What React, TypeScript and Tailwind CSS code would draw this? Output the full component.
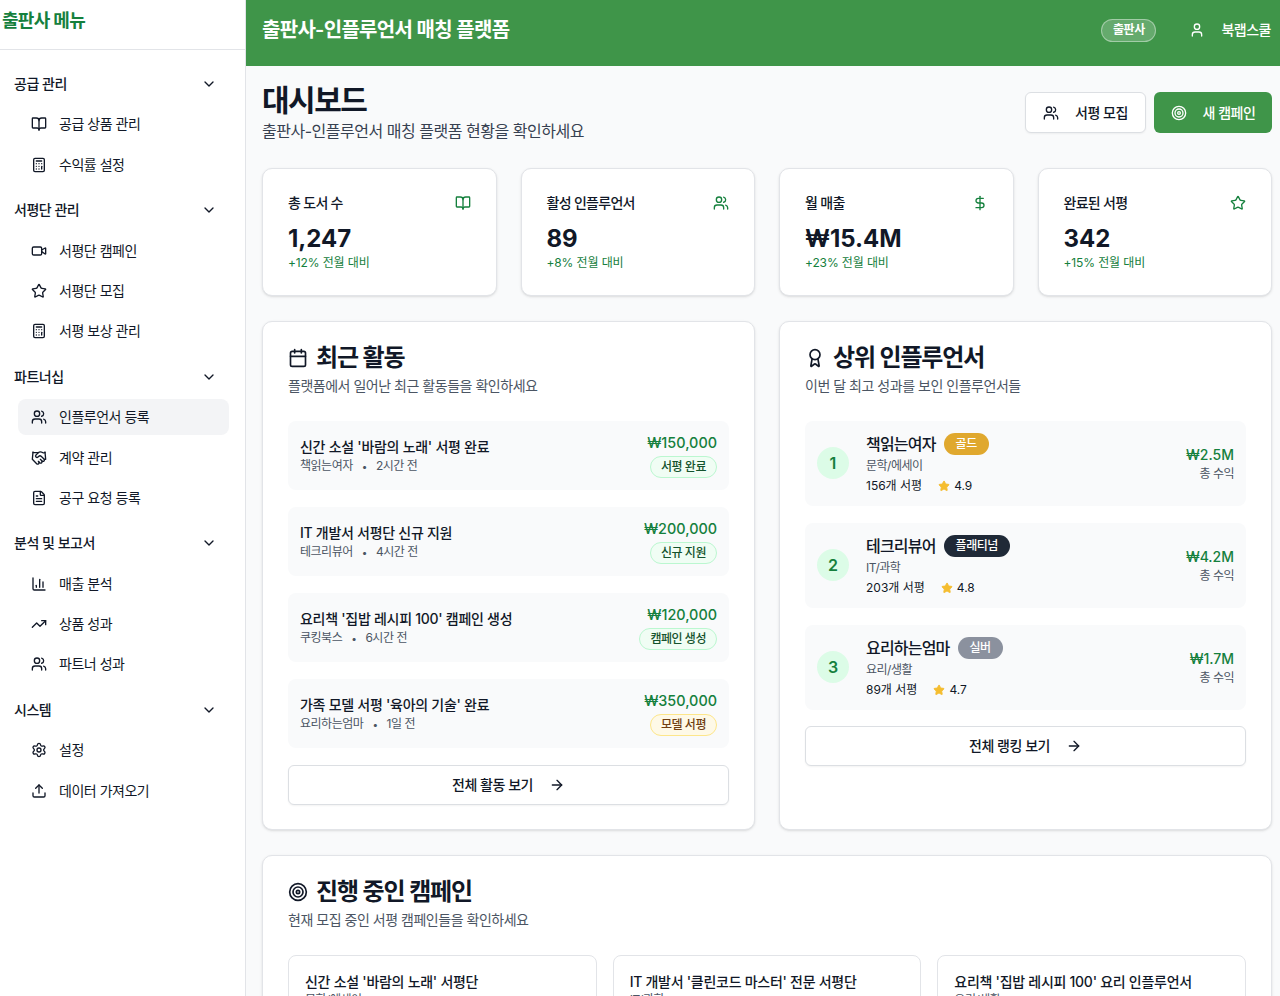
import {
  ArrowRight,
  Award,
  BookOpen,
  Calculator,
  Calendar,
  ChartColumn,
  ChevronDown,
  DollarSign,
  FileText,
  Handshake,
  Settings,
  Star,
  Target,
  TrendingUp,
  Upload,
  User,
  Users,
  Video,
} from 'lucide-react';

const menu = [
  {
    title: '공급 관리',
    items: [
      { label: '공급 상품 관리', icon: BookOpen },
      { label: '수익률 설정', icon: Calculator },
    ],
  },
  {
    title: '서평단 관리',
    items: [
      { label: '서평단 캠페인', icon: Video },
      { label: '서평단 모집', icon: Star },
      { label: '서평 보상 관리', icon: Calculator },
    ],
  },
  {
    title: '파트너십',
    items: [
      { label: '인플루언서 등록', icon: Users, active: true },
      { label: '계약 관리', icon: Handshake },
      { label: '공구 요청 등록', icon: FileText },
    ],
  },
  {
    title: '분석 및 보고서',
    items: [
      { label: '매출 분석', icon: ChartColumn },
      { label: '상품 성과', icon: TrendingUp },
      { label: '파트너 성과', icon: Users },
    ],
  },
  {
    title: '시스템',
    items: [
      { label: '설정', icon: Settings },
      { label: '데이터 가져오기', icon: Upload },
    ],
  },
];

const stats = [
  { label: '총 도서 수', value: '1,247', change: '+12% 전월 대비', icon: BookOpen },
  { label: '활성 인플루언서', value: '89', change: '+8% 전월 대비', icon: Users },
  { label: '월 매출', value: '₩15.4M', change: '+23% 전월 대비', icon: DollarSign },
  { label: '완료된 서평', value: '342', change: '+15% 전월 대비', icon: Star },
];

const activities = [
  { title: "신간 소설 '바람의 노래' 서평 완료", who: '책읽는여자', when: '2시간 전', amount: '₩150,000', tag: '서평 완료', amber: false },
  { title: 'IT 개발서 서평단 신규 지원', who: '테크리뷰어', when: '4시간 전', amount: '₩200,000', tag: '신규 지원', amber: false },
  { title: "요리책 '집밥 레시피 100' 캠페인 생성", who: '쿠킹북스', when: '6시간 전', amount: '₩120,000', tag: '캠페인 생성', amber: false },
  { title: "가족 모델 서평 '육아의 기술' 완료", who: '요리하는엄마', when: '1일 전', amount: '₩350,000', tag: '모델 서평', amber: true },
];

const influencers = [
  { rank: 1, name: '책읽는여자', grade: '골드', gradeClass: 'bg-[#e0a82e]', genre: '문학/에세이', reviews: '156개 서평', rating: '4.9', total: '₩2.5M' },
  { rank: 2, name: '테크리뷰어', grade: '플래티넘', gradeClass: 'bg-[#1f2937]', genre: 'IT/과학', reviews: '203개 서평', rating: '4.8', total: '₩4.2M' },
  { rank: 3, name: '요리하는엄마', grade: '실버', gradeClass: 'bg-[#8b919e]', genre: '요리/생활', reviews: '89개 서평', rating: '4.7', total: '₩1.7M' },
];

const campaigns = [
  { title: "신간 소설 '바람의 노래' 서평단", genre: '문학/에세이' },
  { title: "IT 개발서 '클린코드 마스터' 전문 서평단", genre: 'IT/과학' },
  { title: "요리책 '집밥 레시피 100' 요리 인플루언서", genre: '요리/생활' },
];

function Sidebar() {
  return (
    <aside className="w-[246px] shrink-0 border-r border-[#e2e4e8] bg-white">
      <div className="flex h-[50px] items-center border-b border-[#e2e4e8] pb-2 pl-0.5">
        <h2 className="text-lg font-semibold tracking-[-0.04em] text-[#15803d]">출판사 메뉴</h2>
      </div>
      <nav className="flex flex-col gap-[9.4px] pt-4">
        {menu.map((section) => (
          <div key={section.title} className="flex flex-col gap-[4.4px]">
            <div className="flex h-9 items-center justify-between pl-3.5 pr-[28px]">
              <span className="text-sm font-medium text-[#111827]">{section.title}</span>
              <ChevronDown className="h-4 w-4 text-[#111827]" />
            </div>
            {section.items.map((item) => (
              <div
                key={item.label}
                className={`ml-[18px] mr-4 flex h-9 items-center gap-3 rounded-lg pl-[13px] text-sm text-[#111827] ${
                  item.active ? 'bg-[#f3f4f6]' : ''
                }`}
              >
                <item.icon className="h-4 w-4 shrink-0" />
                <span>{item.label}</span>
              </div>
            ))}
          </div>
        ))}
      </nav>
    </aside>
  );
}

function Header() {
  return (
    <header className="flex h-[66px] shrink-0 items-center justify-between bg-[#3f9549] pb-1.5 pl-4 pr-[9px] text-white">
      <h1 className="text-xl font-semibold tracking-[-0.035em]">출판사-인플루언서 매칭 플랫폼</h1>
      <div className="flex items-center">
        <span className="flex h-[23px] w-[55px] items-center justify-center rounded-full border border-white/40 bg-white/20 text-xs font-semibold">
          출판사
        </span>
        <User className="ml-[33px] h-4 w-4" />
        <span className="ml-4 text-sm font-medium">북랩스쿨</span>
      </div>
    </header>
  );
}

function Panel({ title, desc, icon: Icon, children, className = '' }: { title: string; desc: string; icon: typeof Target; children: React.ReactNode; className?: string }) {
  return (
    <section className={`rounded-[10px] border border-[#e2e4e8] bg-white px-[25px] pb-6 pt-[21px] shadow-sm ${className}`}>
      <div className="flex items-center gap-2">
        <Icon className="h-5 w-5 text-[#111827]" />
        <h3 className="text-2xl font-semibold leading-[30px] tracking-[-0.05em] text-[#111827]">{title}</h3>
      </div>
      <p className="mt-[3px] text-sm leading-5 text-[#4b5563]">{desc}</p>
      {children}
    </section>
  );
}

function OutlineButton({ label, className = '' }: { label: string; className?: string }) {
  return (
    <button className={`flex h-10 w-full items-center justify-center gap-4 rounded-md border border-[#dcdfe3] bg-white text-sm font-medium text-[#111827] shadow-xs ${className}`}>
      {label}
      <ArrowRight className="h-4 w-4" />
    </button>
  );
}

export default function App() {
  return (
    <div className="flex h-[996px] overflow-hidden bg-white font-['Inter','Noto_Sans_CJK_KR',sans-serif] tracking-[-0.03em]">
      <Sidebar />
      <div className="flex min-w-0 flex-1 flex-col bg-[#f9fafb]">
        <Header />
        <main className="flex flex-1 flex-col gap-6 overflow-hidden pl-4 pr-2 pt-4">
          {/* Title row */}
          <div className="flex items-center justify-between pb-px">
            <div>
              <h2 className="text-[30px] font-bold leading-9 tracking-[-0.05em] text-[#111827]">대시보드</h2>
              <p className="mt-px text-base leading-6 text-[#374151]">출판사-인플루언서 매칭 플랫폼 현황을 확인하세요</p>
            </div>
            <div className="flex gap-2">
              <button className="flex h-[41px] w-[121px] items-center justify-center gap-4 rounded-md border border-[#dcdfe3] bg-white text-sm font-medium text-[#111827] shadow-xs">
                <Users className="h-4 w-4" />
                서평 모집
              </button>
              <button className="flex h-[41px] w-[118px] items-center justify-center gap-4 rounded-md bg-[#3f9549] text-sm font-medium text-white">
                <Target className="h-4 w-4" />
                새 캠페인
              </button>
            </div>
          </div>

          {/* Stats */}
          <div className="mb-px grid grid-cols-4 gap-6">
            {stats.map((stat) => (
              <div key={stat.label} className="h-[128px] rounded-[10px] border border-[#e2e4e8] bg-white px-[25px] pt-6 shadow-sm">
                <div className="flex items-center justify-between">
                  <span className="text-sm font-medium tracking-[-0.05em] text-[#111827]">{stat.label}</span>
                  <stat.icon className="h-4 w-4 text-[#15803d]" />
                </div>
                <div className="mt-[10px] text-2xl font-bold leading-8 tracking-normal text-[#111827]">{stat.value}</div>
                <div className="text-xs leading-4 tracking-[-0.01em] text-[#15803d]">{stat.change}</div>
              </div>
            ))}
          </div>

          {/* Activity and ranking */}
          <div className="grid grid-cols-2 gap-6">
            <Panel title="최근 활동" desc="플랫폼에서 일어난 최근 활동들을 확인하세요" icon={Calendar}>
              <div className="mt-[25px] flex flex-col gap-[17px]">
                {activities.map((a) => (
                  <div key={a.title} className="flex h-[69px] items-center justify-between rounded-lg bg-[#f9fafb] px-3">
                    <div className="mb-px">
                      <div className="text-sm font-medium leading-5 tracking-[-0.02em] text-[#111827]">{a.title}</div>
                      <div className="mt-px flex items-center gap-[9px] text-xs leading-4 text-[#4b5563]">
                        <span>{a.who}</span>
                        <span className="text-[10px]">•</span>
                        <span>{a.when}</span>
                      </div>
                    </div>
                    <div className="mb-[3px] flex flex-col items-end gap-[1px]">
                      <span className="text-[14.4px] font-medium leading-6 tracking-normal text-[#15803d]">{a.amount}</span>
                      <span
                        className={`flex h-[22px] items-center rounded-full border px-2.5 text-xs font-medium ${
                          a.amber
                            ? 'border-[#fde68a] bg-[#fef9e7] text-[#713f12]'
                            : 'border-[#bbf7d0] bg-[#f0fdf4] text-[#14532d]'
                        }`}
                      >
                        {a.tag}
                      </span>
                    </div>
                  </div>
                ))}
                <OutlineButton label="전체 활동 보기" />
              </div>
            </Panel>

            <Panel title="상위 인플루언서" desc="이번 달 최고 성과를 보인 인플루언서들" icon={Award}>
              <div className="mt-[25px] flex flex-col gap-[17px]">
                {influencers.map((p) => (
                  <div key={p.rank} className="flex h-[85px] items-center justify-between rounded-lg bg-[#f9fafb] px-3">
                    <div className="mb-[2px] flex items-center gap-[17px]">
                      <div className="flex h-8 w-8 items-center justify-center rounded-full bg-[#dcfce7] text-base font-semibold tracking-normal text-[#15803d]">
                        {p.rank}
                      </div>
                      <div>
                        <div className="flex items-center gap-2">
                          <span className="text-base font-medium leading-6 tracking-[-0.05em] text-[#111827]">{p.name}</span>
                          <span className={`flex h-[22px] items-center rounded-full px-3 text-xs font-medium text-white ${p.gradeClass}`}>
                            {p.grade}
                          </span>
                        </div>
                        <div className="mt-0.5 text-xs leading-4 text-[#4b5563]">{p.genre}</div>
                        <div className="mt-1 flex items-center gap-4 text-xs leading-4 tracking-normal text-[#111827]">
                          <span>{p.reviews}</span>
                          <span className="flex items-center gap-1">
                            <Star className="h-3 w-3 fill-[#f5bd2f] text-[#f5bd2f]" />
                            {p.rating}
                          </span>
                        </div>
                      </div>
                    </div>
                    <div className="text-right">
                      <div className="text-sm font-medium leading-5 tracking-normal text-[#15803d]">{p.total}</div>
                      <div className="mt-px text-xs leading-4 text-[#4b5563]">총 수익</div>
                    </div>
                  </div>
                ))}
                <OutlineButton label="전체 랭킹 보기" className="-mt-px" />
              </div>
            </Panel>
          </div>

          {/* Campaigns */}
          <Panel title="진행 중인 캠페인" desc="현재 모집 중인 서평 캠페인들을 확인하세요" icon={Target} className="mt-px">
            <div className="mt-[25px] grid grid-cols-3 gap-4">
              {campaigns.map((c) => (
                <div key={c.title} className="rounded-lg border border-[#e2e4e8] bg-white px-4 pb-4 pt-4">
                  <div className="text-sm font-medium leading-5 tracking-[-0.02em] text-[#111827]">{c.title}</div>
                  <div className="text-xs leading-4 text-[#4b5563]">{c.genre}</div>
                </div>
              ))}
            </div>
          </Panel>
        </main>
      </div>
    </div>
  );
}
